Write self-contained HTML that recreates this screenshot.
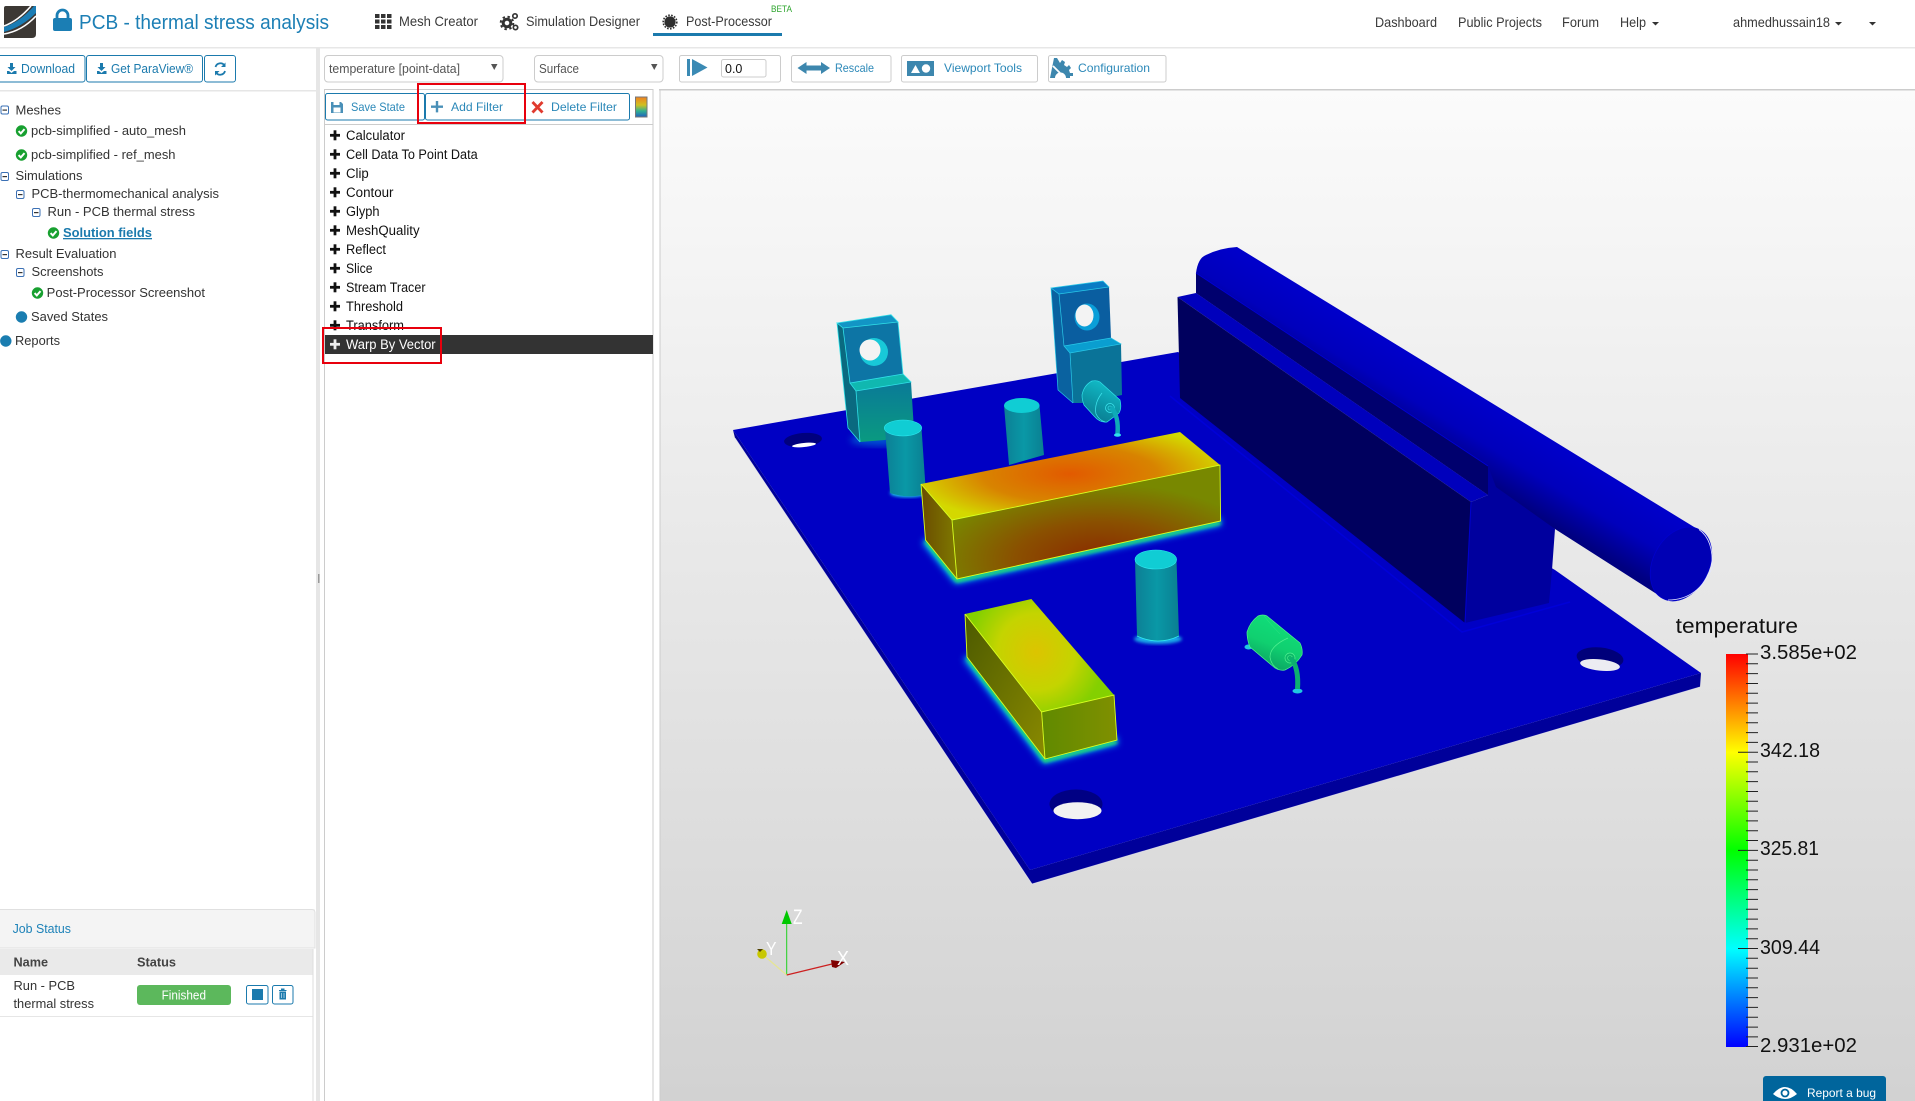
<!DOCTYPE html>
<html lang="en"><head><meta charset="utf-8"><title>PCB - thermal stress analysis</title>
<style>
html,body{margin:0;padding:0;background:#fff;width:1915px;height:1101px;overflow:hidden}
svg{display:block}
text{font-family:"Liberation Sans",sans-serif;white-space:pre}
.n{font-size:14px;fill:#3a3a3a}
.t{font-size:13px;fill:#333}
.l{font-size:13.5px;fill:#111}
.b{font-size:12px;fill:#2b88b8}
.v{font-size:20px;fill:#111}
</style></head><body>
<svg width="1915" height="1101" viewBox="0 0 1915 1101" xmlns="http://www.w3.org/2000/svg">
<defs>
<linearGradient id="bg" x1="0" y1="0" x2="0" y2="1"><stop offset="0" stop-color="#fbfbfb"/><stop offset="1" stop-color="#d2d2d2"/></linearGradient>
<linearGradient id="cb" x1="0" y1="0" x2="0" y2="1"><stop offset="0" stop-color="#ff0000"/><stop offset=".25" stop-color="#ffff00"/><stop offset=".5" stop-color="#00ff00"/><stop offset=".75" stop-color="#00ffff"/><stop offset="1" stop-color="#0000ff"/></linearGradient>
<linearGradient id="cyl" gradientUnits="userSpaceOnUse" x1="1520" y1="417" x2="1481" y2="481"><stop offset="0" stop-color="#0000cc"/><stop offset=".55" stop-color="#0000bc"/><stop offset="1" stop-color="#000080"/></linearGradient>
<linearGradient id="teal" x1="0" y1="0" x2="1" y2="0"><stop offset="0" stop-color="#0c7f95"/><stop offset=".5" stop-color="#0a98a6"/><stop offset="1" stop-color="#0a7f92"/></linearGradient>
<linearGradient id="tl" x1="0" y1="0" x2="0" y2="1"><stop offset="0" stop-color="#0a7a98"/><stop offset="1" stop-color="#0a9a80"/></linearGradient>
<linearGradient id="gc" x1="0.7" y1="0" x2="0.3" y2="1"><stop offset="0" stop-color="#10e07c"/><stop offset=".55" stop-color="#10d070"/><stop offset="1" stop-color="#0a9c60"/></linearGradient>
<linearGradient id="tc" x1="0.7" y1="0" x2="0.3" y2="1"><stop offset="0" stop-color="#12c0cc"/><stop offset=".55" stop-color="#0c98a8"/><stop offset="1" stop-color="#0a7a90"/></linearGradient>
<radialGradient id="boxtop" gradientUnits="userSpaceOnUse" cx="1070" cy="474" r="160" gradientTransform="translate(1070 474) scale(1 .32) translate(-1070 -474)"><stop offset="0" stop-color="#e25a00"/><stop offset=".55" stop-color="#d88400"/><stop offset="1" stop-color="#d4d800"/></radialGradient>
<radialGradient id="boxfront" gradientUnits="userSpaceOnUse" cx="1100" cy="560" r="170" gradientTransform="translate(1100 560) scale(1 .45) translate(-1100 -560)"><stop offset="0" stop-color="#8a2800"/><stop offset=".5" stop-color="#8a5000"/><stop offset="1" stop-color="#788800"/></radialGradient>
<linearGradient id="boxleft" x1="0" y1="0" x2="1" y2="0"><stop offset="0" stop-color="#6a4c00"/><stop offset="1" stop-color="#7f7a00"/></linearGradient>
<radialGradient id="sbtop" gradientUnits="userSpaceOnUse" cx="1036" cy="652" r="70"><stop offset="0" stop-color="#dcc400"/><stop offset=".55" stop-color="#c4d400"/><stop offset="1" stop-color="#84d000"/></radialGradient>
<linearGradient id="sbleft" x1="0" y1="0" x2="1" y2="1"><stop offset="0" stop-color="#4c5a00"/><stop offset="1" stop-color="#8a8a00"/></linearGradient>
<linearGradient id="sbfront" x1="0" y1="0" x2="1" y2="0"><stop offset="0" stop-color="#608a00"/><stop offset="1" stop-color="#809000"/></linearGradient>
<linearGradient id="icn" x1="0" y1="0" x2="0" y2="1"><stop offset="0" stop-color="#f08020"/><stop offset=".4" stop-color="#d0c020"/><stop offset=".7" stop-color="#30b090"/><stop offset="1" stop-color="#2060c0"/></linearGradient>
<filter id="bl" x="-20%" y="-20%" width="140%" height="140%"><feGaussianBlur stdDeviation="3.5"/></filter>
<filter id="bs" x="-20%" y="-20%" width="140%" height="140%"><feGaussianBlur stdDeviation="1.6"/></filter>
<g id="ck"><circle cx="5.5" cy="5.5" r="5.7" fill="#18a030"/><path d="M2.6 5.6 4.8 7.9 8.5 3.6" fill="none" stroke="#fff" stroke-width="2"/></g>
<g id="mb"><rect x=".5" y=".5" width="7.5" height="8" rx="1.5" fill="#fff" stroke="#3b70b4"/><rect x="2" y="4" width="4.5" height="1.2" fill="#333"/></g>
<g id="pl"><rect x="0" y="3.6" width="10" height="2.8"/><rect x="3.6" y="0" width="2.8" height="10"/></g>
</defs>

<rect width="1915" height="1101" fill="#fff"/>
<!-- top bar -->
<rect x="0" y="47" width="1915" height="1.5" fill="#e7e7e7"/>
<!-- logo -->
<path d="M6 6H36V34Q36 38 32 38H4V8Q4 6 6 6Z" fill="#3c3834"/>
<path d="M4 27Q20 22 34 6H36V13Q22 27 4 32Z" fill="#1a7cb4"/>
<path d="M4 34Q22 31 36 16" fill="none" stroke="#fff" stroke-width="1.6"/>
<path d="M4 26Q18 21 31 6" fill="none" stroke="#fff" stroke-width="1.6"/>
<!-- lock -->
<path d="M57 19V15.5a5.5 5.5 0 0 1 11 0V19" fill="none" stroke="#1b7eb4" stroke-width="2.8"/>
<rect x="53" y="18" width="19" height="13" rx="2" fill="#1b7eb4"/>
<text x="79" y="29" font-size="20.5" fill="#1c7fb5" textLength="250" lengthAdjust="spacingAndGlyphs">PCB - thermal stress analysis</text>
<!-- nav -->
<g fill="#333"><rect x="375" y="14" width="4.5" height="4"/><rect x="381" y="14" width="4.5" height="4"/><rect x="387" y="14" width="4.5" height="4"/><rect x="375" y="19.5" width="4.5" height="4"/><rect x="381" y="19.5" width="4.5" height="4"/><rect x="387" y="19.5" width="4.5" height="4"/><rect x="375" y="25" width="4.5" height="4"/><rect x="381" y="25" width="4.5" height="4"/><rect x="387" y="25" width="4.5" height="4"/></g>
<text class="n" x="399" y="26" textLength="79" lengthAdjust="spacingAndGlyphs">Mesh Creator</text>
<circle cx="507" cy="23" r="3.8" fill="none" stroke="#333" stroke-width="3"/><circle cx="507" cy="23" r="6.3" fill="none" stroke="#333" stroke-width="2" stroke-dasharray="2.4 2.6"/>
<circle cx="515" cy="16" r="2.2" fill="none" stroke="#333" stroke-width="1.7"/><circle cx="515.5" cy="27.5" r="2.2" fill="none" stroke="#333" stroke-width="1.7"/>
<text class="n" x="526" y="26" textLength="114" lengthAdjust="spacingAndGlyphs">Simulation Designer</text>
<circle cx="670" cy="22" r="5.6" fill="#2e2e2e"/><circle cx="670" cy="22" r="6.8" fill="none" stroke="#2e2e2e" stroke-width="1.6" stroke-dasharray="1.6 1.4"/>
<text class="n" x="686" y="26" textLength="86" lengthAdjust="spacingAndGlyphs">Post-Processor</text>
<text x="771" y="12" font-size="9" fill="#2ea52e" textLength="21" lengthAdjust="spacingAndGlyphs">BETA</text>
<rect x="653" y="33" width="129" height="3" fill="#1b7aad"/>
<text class="n" x="1375" y="27" textLength="62" lengthAdjust="spacingAndGlyphs">Dashboard</text>
<text class="n" x="1458" y="27" textLength="84" lengthAdjust="spacingAndGlyphs">Public Projects</text>
<text class="n" x="1562" y="27" textLength="37" lengthAdjust="spacingAndGlyphs">Forum</text>
<text class="n" x="1620" y="27" textLength="26" lengthAdjust="spacingAndGlyphs">Help</text>
<path d="M1652 22h7l-3.5 3.5z" fill="#333"/>
<text class="n" x="1733" y="27" textLength="97" lengthAdjust="spacingAndGlyphs">ahmedhussain18</text>
<path d="M1835 22h7l-3.5 3.5z" fill="#333"/><path d="M1869 22h7l-3.5 3.5z" fill="#333"/>

<!-- sidebar buttons -->
<g fill="#fff" stroke="#1b7aad"><rect x="-3" y="55.5" width="88" height="26.5" rx="2.5"/><rect x="86.5" y="55.500" width="116" height="26.500" rx="2.500"/><rect x="204.500" y="55.500" width="31" height="26.500" rx="2.500"/></g>
<g fill="#1b7aad"><path d="M10 63h3v4h2.500l-4 4-4-4H10zM7 71h2l2.500 2 2.500-2h2.500v3H7z"/><path d="M100 63h3v4h2.500l-4 4-4-4h2.500zM97 71h2l2.500 2 2.500-2h2.500v3H97z"/></g>
<text x="21" y="73" font-size="12.500" fill="#1b7aad" textLength="54" lengthAdjust="spacingAndGlyphs">Download</text>
<text x="111" y="73" font-size="12.500" fill="#1b7aad" textLength="82" lengthAdjust="spacingAndGlyphs">Get ParaView®</text>
<path d="M215.500 67a5 5 0 0 1 9-1.500M225 71a5 5 0 0 1-9 1.500" fill="none" stroke="#1b7aad" stroke-width="1.800"/><path d="M225.500 62.500v4.500h-4.500zM215 75.500V71h4.500z" fill="#1b7aad"/>
<rect x="0" y="90" width="316" height="1.500" fill="#e6e6e6"/>

<!-- sidebar dividers -->
<rect x="316" y="48" width="4" height="1053" fill="#e6e6e6"/>
<rect x="318" y="574" width="1.500" height="9" fill="#999"/>

<!-- tree -->
<use href="#mb" x="0.500" y="105.500"/><text class="t" x="15.500" y="114.500" textLength="45.500" lengthAdjust="spacingAndGlyphs">Meshes</text>
<use href="#ck" x="16" y="125.500"/><text class="t" x="31" y="135" textLength="155" lengthAdjust="spacingAndGlyphs">pcb-simplified - auto_mesh</text>
<use href="#ck" x="16" y="149.500"/><text class="t" x="31" y="159" textLength="144.500" lengthAdjust="spacingAndGlyphs">pcb-simplified - ref_mesh</text>
<use href="#mb" x="0.500" y="172"/><text class="t" x="15.500" y="180" textLength="67" lengthAdjust="spacingAndGlyphs">Simulations</text>
<use href="#mb" x="16" y="190"/><text class="t" x="31.500" y="198" textLength="187.500" lengthAdjust="spacingAndGlyphs">PCB-thermomechanical analysis</text>
<use href="#mb" x="32" y="208"/><text class="t" x="47.500" y="216" textLength="147.500" lengthAdjust="spacingAndGlyphs">Run - PCB thermal stress</text>
<use href="#ck" x="48" y="227.500"/><text x="63" y="237" font-size="13" font-weight="700" fill="#1b7aad" text-decoration="underline" textLength="89" lengthAdjust="spacingAndGlyphs">Solution fields</text>
<use href="#mb" x="0.500" y="250"/><text class="t" x="15.500" y="258" textLength="101" lengthAdjust="spacingAndGlyphs">Result Evaluation</text>
<use href="#mb" x="16" y="268"/><text class="t" x="31.500" y="276" textLength="72" lengthAdjust="spacingAndGlyphs">Screenshots</text>
<use href="#ck" x="32" y="287.500"/><text class="t" x="46.700" y="297" textLength="158.300" lengthAdjust="spacingAndGlyphs">Post-Processor Screenshot</text>
<circle cx="21.500" cy="317" r="5.700" fill="#1a7db0"/><text class="t" x="31" y="321" textLength="77" lengthAdjust="spacingAndGlyphs">Saved States</text>
<circle cx="5.800" cy="341" r="5.700" fill="#1a7db0"/><text class="t" x="15" y="345" textLength="45" lengthAdjust="spacingAndGlyphs">Reports</text>

<!-- job status -->
<rect x="0" y="909" width="315" height="39" fill="#f4f4f4"/>
<path d="M0 909.500H312a3 3 0 0 1 3 3V948H0" fill="none" stroke="#e0e0e0"/>
<text x="12.600" y="933" font-size="13" fill="#1d82b8" textLength="58.400" lengthAdjust="spacingAndGlyphs">Job Status</text>
<rect x="0" y="949" width="312.500" height="26" fill="#eaeaea"/>
<text x="13.500" y="966.500" font-size="12.500" font-weight="700" fill="#444" textLength="34.500" lengthAdjust="spacingAndGlyphs">Name</text>
<text x="137" y="966.500" font-size="12.500" font-weight="700" fill="#444" textLength="39" lengthAdjust="spacingAndGlyphs">Status</text>
<text class="t" x="13.500" y="990" textLength="61.500" lengthAdjust="spacingAndGlyphs">Run - PCB</text>
<text class="t" x="13.500" y="1008" textLength="80.500" lengthAdjust="spacingAndGlyphs">thermal stress</text>
<rect x="137" y="985" width="94" height="20" rx="3" fill="#5cb85c"/>
<text x="161.600" y="999.500" font-size="12.500" fill="#fff" textLength="44.400" lengthAdjust="spacingAndGlyphs">Finished</text>
<rect x="246.500" y="985.500" width="21.500" height="18.500" rx="2" fill="#fff" stroke="#1b7aad"/>
<rect x="252" y="989" width="11" height="11" fill="#1b7aad"/>
<rect x="272.500" y="985.500" width="20.500" height="18.500" rx="2" fill="#fff" stroke="#1b7aad"/>
<path d="M279 990h7.500v1H279zM281 988.500h3.500v1.500h-3.500zM279.500 991.500h6.500v8h-6.500z" fill="#1b7aad"/><path d="M281.500 993v5M284 993v5" stroke="#b8d8ea" stroke-width=".8"/>
<rect x="0" y="1016" width="312.500" height="1" fill="#e6e6e6"/>
<rect x="312.500" y="949" width="1" height="152" fill="#ddd"/>

<!-- selects and toolbar -->
<g fill="#fff" stroke="#ccc"><rect x="324.500" y="55.500" width="178.500" height="26.500" rx="3.500"/><rect x="534.500" y="55.500" width="128.500" height="26.500" rx="3.500"/><rect x="679.500" y="55.500" width="101" height="26.500" rx="2"/><rect x="791.500" y="55.500" width="99.500" height="26.500" rx="2"/><rect x="901.500" y="55.500" width="136" height="26.500" rx="2"/><rect x="1048.500" y="55.500" width="117.500" height="26.500" rx="2"/></g>
<text x="329" y="73" font-size="12.500" fill="#555" textLength="131" lengthAdjust="spacingAndGlyphs">temperature [point-data]</text>
<path d="M491 64h6.500l-3.250 6z" fill="#555"/>
<text x="539" y="73" font-size="12.500" fill="#555" textLength="40" lengthAdjust="spacingAndGlyphs">Surface</text>
<path d="M651 64h6.500l-3.250 6z" fill="#555"/>
<rect x="687" y="59" width="3" height="17" fill="#3b8ab4"/><path d="M692 59l15.500 8.500-15.500 8.500z" fill="#3b8ab4"/>
<rect x="721.500" y="59.500" width="44.500" height="17.500" rx="2" fill="#fff" stroke="#ccc"/>
<text x="725" y="73" font-size="12.500" fill="#111">0.0</text>
<path d="M797.500 68l9-6v3.500h14.500V62l9 6-9 6v-3.500h-14.500V74z" fill="#3d87ae"/>
<text class="b" x="835" y="72" textLength="39" lengthAdjust="spacingAndGlyphs">Rescale</text>
<rect x="907" y="61" width="27" height="15" fill="#3d87ae"/><path d="M911 73l4.500-8 4.500 8z" fill="#fff"/><circle cx="926" cy="68.500" r="4.200" fill="#fff"/>
<text class="b" x="944" y="72" textLength="78" lengthAdjust="spacingAndGlyphs">Viewport Tools</text>
<path d="M1054 58h3l3 5 2-3 3 2-1 3 3 2 2-2 2 3-2 2 1 3h3v3h-3v2h-4a5.500 5.500 0 0 0-11 0h-5Z" fill="#3d87ae"/>
<path d="M1053 66 1060 73" stroke="#fff" stroke-width="1.800" fill="none"/>
<text class="b" x="1078" y="72" textLength="72" lengthAdjust="spacingAndGlyphs">Configuration</text>

<!-- filter panel -->
<rect x="324.500" y="89.500" width="328.500" height="1012" fill="#fff" stroke="#ccc"/>
<rect x="325" y="124" width="328" height="1" fill="#ccc"/>
<rect x="325.500" y="93.500" width="99" height="26.500" rx="2" fill="#fff" stroke="#1b7aad"/>
<rect x="425.500" y="93.500" width="204" height="26.500" rx="2" fill="#fff" stroke="#1b7aad"/>
<path d="M331 102h10l2 2v9h-12z" fill="#4a90b8"/><rect x="333.500" y="102" width="6" height="3" fill="#fff"/><rect x="333.500" y="107.500" width="7" height="5" fill="#fff"/>
<text class="b" x="351" y="111" textLength="54" lengthAdjust="spacingAndGlyphs">Save State</text>
<path d="M431 105.500h4.800V101h2.400v4.500h4.800v2.400h-4.800v4.500h-2.400v-4.500H431z" fill="#4a90b8"/>
<text class="b" x="451" y="111" textLength="52" lengthAdjust="spacingAndGlyphs">Add Filter</text>
<path d="M532.500 102l10 10.500M542.500 102l-10 10.500" stroke="#e03a2e" stroke-width="2.800"/>
<text class="b" x="551" y="111" textLength="66" lengthAdjust="spacingAndGlyphs">Delete Filter</text>
<rect x="635.500" y="97" width="11.500" height="20" fill="url(#icn)" stroke="#777"/>

<g fill="#111">
<use href="#pl" x="330" y="130.300"/><use href="#pl" x="330" y="149.300"/><use href="#pl" x="330" y="168.300"/><use href="#pl" x="330" y="187.300"/><use href="#pl" x="330" y="206.300"/><use href="#pl" x="330" y="225.300"/><use href="#pl" x="330" y="244.300"/><use href="#pl" x="330" y="263.300"/><use href="#pl" x="330" y="282.300"/><use href="#pl" x="330" y="301.300"/><use href="#pl" x="330" y="320.300"/>
</g>
<text class="l" x="346" y="140" textLength="59" lengthAdjust="spacingAndGlyphs">Calculator</text>
<text class="l" x="346" y="159" textLength="131.700" lengthAdjust="spacingAndGlyphs">Cell Data To Point Data</text>
<text class="l" x="346" y="178" textLength="22.700" lengthAdjust="spacingAndGlyphs">Clip</text>
<text class="l" x="346" y="197" textLength="47.500" lengthAdjust="spacingAndGlyphs">Contour</text>
<text class="l" x="346" y="216" textLength="33.600" lengthAdjust="spacingAndGlyphs">Glyph</text>
<text class="l" x="346" y="235" textLength="73.600" lengthAdjust="spacingAndGlyphs">MeshQuality</text>
<text class="l" x="346" y="254" textLength="40" lengthAdjust="spacingAndGlyphs">Reflect</text>
<text class="l" x="346" y="273" textLength="26.500" lengthAdjust="spacingAndGlyphs">Slice</text>
<text class="l" x="346" y="292" textLength="79.500" lengthAdjust="spacingAndGlyphs">Stream Tracer</text>
<text class="l" x="346" y="311" textLength="57" lengthAdjust="spacingAndGlyphs">Threshold</text>
<text class="l" x="346" y="330" textLength="58" lengthAdjust="spacingAndGlyphs">Transform</text>
<rect x="325" y="335" width="328" height="19" fill="#333"/>
<use href="#pl" x="330" y="339.300" fill="#eee"/>
<text class="l" x="346" y="349" style="fill:#fff" textLength="89.600" lengthAdjust="spacingAndGlyphs">Warp By Vector</text>
<rect x="418" y="84" width="107" height="39" fill="none" stroke="#e8000d" stroke-width="2"/>
<rect x="323" y="328" width="118" height="35" fill="none" stroke="#e8000d" stroke-width="2"/>

<!-- viewport -->
<rect x="660" y="90" width="1255" height="1011" fill="url(#bg)"/>
<rect x="659" y="89" width="1256" height="1.500" fill="#ccc"/>
<rect x="659.500" y="89" width="1" height="1012" fill="#ccc"/>

<!-- plate -->
<polygon points="733,430 735,438 1032,884 1700,687 1701,673 1030,870" fill="#00009a"/>
<polygon points="733,430 1178,352 1555,570 1701,673 1030,870" fill="#0000c4"/>
<polyline points="735,438 1032,884 1700,687" fill="none" stroke="#e8e8f0" stroke-width=".8" opacity=".8"/>
<!-- holes -->
<ellipse cx="803" cy="440" rx="19" ry="7" fill="#00007e" transform="rotate(-5 803 440)"/><ellipse cx="804" cy="445" rx="12" ry="2" fill="#fff" transform="rotate(-6 804 445)"/>
<ellipse cx="1076" cy="804" rx="26.500" ry="14.500" fill="#000084"/><ellipse cx="1077.500" cy="810.700" rx="24" ry="8.500" fill="#f2f2f2"/>
<ellipse cx="1600" cy="658" rx="23.500" ry="10.500" fill="#00007a" transform="rotate(6 1600 658)"/><ellipse cx="1600" cy="665" rx="20" ry="5.700" fill="#ececf2" transform="rotate(6 1600 665)"/>

<!-- heat sink -->
<polyline points="1170,396 1462,632 1570,602" fill="none" stroke="#0000d8" stroke-width="1.500"/>
<path d="M1196 273Q1198 258 1206 255Q1220 248 1237 247L1699 530L1663 598L1555 529L1488 495L1196 293Z" fill="url(#cyl)"/>
<ellipse cx="1681" cy="564" rx="28" ry="39" transform="rotate(28 1681 564)" fill="#0000b4" stroke="#0000d0" stroke-width=".7"/>
<path d="M1699 529.500Q1714 540 1712 568Q1698 600 1668 600" fill="none" stroke="#e4e6ff" stroke-width=".8"/>
<polygon points="1196,273 1488,466 1488,495 1196,293" fill="#00006e"/>
<line x1="1196" y1="273" x2="1488" y2="466" stroke="#0000d8" stroke-width=".8"/>
<polygon points="1177.500,297 1196,293 1488,495 1471,502" fill="#0000bc"/>
<polygon points="1177.500,297 1471,502 1465,623 1180,398" fill="#00005e"/>
<polygon points="1471,502 1488,495 1488,466 1496,487 1555,529 1552,570 1549,603 1465,623" fill="#00009e"/>
<line x1="1471" y1="502" x2="1465" y2="623" stroke="#0000d0"/>

<!-- left terminal -->
<ellipse cx="880" cy="440" rx="30" ry="6" fill="#00b0e0" opacity=".45" filter="url(#bl)"/>
<polygon points="837,323 891,314.700 898,322 843,328" fill="#1295c5"/>
<polygon points="843,328 898,322 903,374 850,383" fill="#0d75a5"/>
<polygon points="837,323 843,328 850,383 856,391 860,442 848,428" fill="#0a6a80"/>
<polygon points="850,383 903,374 911,382 856,391" fill="#10b8b0"/>
<polygon points="856,391 911,382 914,430 885,440 860,442" fill="url(#tl)"/>
<g fill="none" stroke="#30e0e8" stroke-width=".8"><polyline points="837,323 891,314.700 898,322 843,328 837,323 848,428 860,442"/><polyline points="843,328 850,383 903,374 898,322"/><polyline points="850,383 856,391 911,382 903,374"/><line x1="856" y1="391" x2="860" y2="442"/></g>
<ellipse cx="874" cy="352" rx="14" ry="14" fill="#18c8d8"/><ellipse cx="870" cy="350" rx="10.500" ry="10.500" fill="#f3f3f3"/>

<!-- right terminal -->
<polygon points="1051,288 1103,281 1109,287 1059,294" fill="#0a7cc4"/>
<polygon points="1059,294 1109,287 1111,338 1064,346" fill="#0a5ea0"/>
<polygon points="1051,288 1059,294 1064,346 1070,353 1073,403 1058,390" fill="#0a62a0"/>
<polygon points="1064,346 1111,338 1121,344 1070,353" fill="#0a9ed0"/>
<polygon points="1070,353 1121,344 1122,395 1083,403 1073,403" fill="#0a7398"/>
<g fill="none" stroke="#28c8e8" stroke-width=".7"><polyline points="1051,288 1103,281 1109,287 1059,294 1051,288 1058,390 1073,403"/><polyline points="1059,294 1064,346 1070,353 1121,344 1111,338 1064,346"/><line x1="1070" y1="353" x2="1073" y2="403"/></g>
<ellipse cx="1087" cy="317" rx="12.500" ry="13.500" fill="#0a9ed8"/><ellipse cx="1084.500" cy="315.500" rx="9" ry="11" fill="#f3f3f3"/>

<!-- small cap near right terminal -->
<path d="M1082 395Q1084 385 1092 381Q1097 380 1100 382L1120 400Q1122 408 1119 413L1107 422Q1100 423 1094 416L1084 405Q1082 400 1082 395Z" fill="url(#tc)" stroke="#30e0e8" stroke-width=".7"/>
<path d="M1102 393Q1094 403 1096 414Q1099 420 1105 422" fill="none" stroke="#40e8f0" stroke-width=".7"/>
<circle cx="1110" cy="408" r="4.500" fill="#0c98a8" stroke="#40e8f0" stroke-width=".7"/><circle cx="1110" cy="408" r="2" fill="none" stroke="#40e8f0" stroke-width=".6"/>
<path d="M1111 407Q1119 416 1117.500 434" fill="none" stroke="#0faab8" stroke-width="4.500"/>
<ellipse cx="1117.500" cy="435" rx="3.500" ry="1.800" fill="#30e0f0"/>

<!-- cylinders -->
<g>
<ellipse cx="908" cy="493" rx="18" ry="4" fill="#20e0f0" filter="url(#bs)"/>
<path d="M885 428H921.500L926 494Q908 499 890 493Z" fill="url(#teal)"/>
<ellipse cx="903" cy="428" rx="18.700" ry="8" fill="#10cdd4" stroke="#30e8f0" stroke-width=".6"/>
<path d="M1004 405.500H1039.500L1044 455L1009 465Z" fill="url(#teal)"/>
<ellipse cx="1021.800" cy="405.500" rx="17.800" ry="7.500" fill="#10cdd4"/>
<ellipse cx="1158" cy="639" rx="24" ry="5" fill="#20d8f0" opacity=".8" filter="url(#bs)"/>
<path d="M1135 559.500H1176.500L1179 636Q1158 646 1137 636Z" fill="url(#teal)"/>
<path d="M1137 636Q1158 646 1179 636" fill="none" stroke="#30e8f0" stroke-width=".8"/>
<ellipse cx="1155.800" cy="559.500" rx="20.800" ry="9.500" fill="#10cdd4" stroke="#30e8f0" stroke-width=".6"/>
</g>

<!-- big box -->
<polyline points="925.500,540 957,579 1220.600,521" fill="none" stroke="#00d0ff" stroke-width="8" filter="url(#bl)"/>
<polyline points="925.500,541 957,581 1220.600,523" fill="none" stroke="#20e060" stroke-width="3" filter="url(#bs)"/>
<polygon points="921,484 1180,432 1220,465 952,520" fill="url(#boxtop)"/>
<polygon points="952,520 1220,465 1220.600,521 957,579" fill="url(#boxfront)"/>
<polygon points="921,484 952,520 957,579 925.500,540" fill="url(#boxleft)"/>
<g fill="none" stroke="#d8ff20" stroke-width=".9"><polyline points="921,484 952,520 1220,465 1220.600,521 957,579 925.500,540 921,484"/><line x1="952" y1="520" x2="957" y2="579"/></g>

<!-- small box -->
<polyline points="967,657 1045,759 1117,740" fill="none" stroke="#00d0ff" stroke-width="8" filter="url(#bl)"/>
<polyline points="967,658 1045,761 1117,742" fill="none" stroke="#20e060" stroke-width="3" filter="url(#bs)"/>
<polygon points="965,614 1031.400,599 1114,695 1041.600,712" fill="url(#sbtop)"/>
<polygon points="965,614 1041.600,712 1045,759 967,657" fill="url(#sbleft)"/>
<polygon points="1041.600,712 1114,695 1117,740 1045,759" fill="url(#sbfront)"/>
<g fill="none" stroke="#d8ff20" stroke-width=".9"><polyline points="965,614 1041.600,712 1114,695 1117,740 1045,759 967,657 965,614"/><line x1="1041.600" y1="712" x2="1045" y2="759"/></g>

<!-- green cap -->
<ellipse cx="1248.500" cy="647" rx="4" ry="2.500" fill="#20c8e0"/>
<ellipse cx="1297.500" cy="691" rx="5" ry="2.500" fill="#20c8e0"/>
<path d="M1247 632Q1250 622 1258 616Q1263 614 1267 616L1300 643Q1303 649 1302 655Q1296 665 1285 670Q1280 671 1275 668L1250 647Q1247 640 1247 632Z" fill="url(#gc)" stroke="#50f090" stroke-width=".7"/>
<path d="M1288 638Q1270 646 1270 657Q1271 665 1278 669" fill="none" stroke="#50f090" stroke-width=".7"/>
<path d="M1264 616Q1272 626 1280 634" fill="none" stroke="#50f090" stroke-width=".4" opacity=".6"/>
<circle cx="1290" cy="658" r="5" fill="#0cb868" stroke="#50f090" stroke-width=".7"/><circle cx="1290" cy="658" r="2.500" fill="none" stroke="#50f090" stroke-width=".6"/>
<path d="M1291 658Q1299 668 1297.500 689" fill="none" stroke="#0cb070" stroke-width="5"/>

<!-- axes -->
<line x1="786.700" y1="975" x2="786.700" y2="920" stroke="#20d020" stroke-width="1"/>
<path d="M786.700 910l5 14h-10z" fill="#00c800"/>
<line x1="786.700" y1="975" x2="762" y2="954" stroke="#e6e690" stroke-width="1.200"/>
<circle cx="762" cy="954" r="4.800" fill="#c8c800"/><path d="M757 949h6l-3 3z" fill="#504000"/>
<line x1="786.700" y1="975" x2="832" y2="964" stroke="#cc2020" stroke-width="1.200"/>
<path d="M831 960l14 2-9 6-4-1z" fill="#800000"/>
<text x="793" y="924" font-size="21" fill="#fff" textLength="9.500" lengthAdjust="spacingAndGlyphs">Z</text>
<text x="766" y="955" font-size="18" fill="#fff" textLength="10.500" lengthAdjust="spacingAndGlyphs">Y</text>
<text x="837" y="965" font-size="20" fill="#fff" textLength="12" lengthAdjust="spacingAndGlyphs">X</text>

<!-- colour bar -->
<rect x="1726" y="654" width="22" height="393" fill="url(#cb)"/>
<g stroke="#222" stroke-width="1">
<path d="M1746 654h12M1746 663.800h12M1746 673.600h12M1746 683.500h12M1746 693.300h12M1746 703.100h12M1746 712.900h12M1746 722.700h12M1746 732.600h12M1746 742.400h12M1738 752.200h20M1746 762h12M1746 771.800h12M1746 781.600h12M1746 791.500h12M1746 801.300h12M1746 811.100h12M1746 820.900h12M1746 830.700h12M1746 840.500h12M1738 850.400h20M1746 860.200h12M1746 870h12M1746 879.800h12M1746 889.600h12M1746 899.400h12M1746 909.300h12M1746 919.100h12M1746 928.900h12M1746 938.700h12M1738 948.500h20M1746 958.300h12M1746 968.200h12M1746 978h12M1746 987.800h12M1746 997.600h12M1746 1007.400h12M1746 1017.200h12M1746 1027.100h12M1746 1036.900h12M1746 1046.500h12"/>
</g>
<text class="v" x="1675.700" y="633" style="font-size:21px" textLength="122.300" lengthAdjust="spacingAndGlyphs">temperature</text>
<text class="v" x="1760" y="659" textLength="97" lengthAdjust="spacingAndGlyphs">3.585e+02</text>
<text class="v" x="1760" y="757" textLength="60" lengthAdjust="spacingAndGlyphs">342.18</text>
<text class="v" x="1760" y="855" textLength="59" lengthAdjust="spacingAndGlyphs">325.81</text>
<text class="v" x="1760" y="954" textLength="60" lengthAdjust="spacingAndGlyphs">309.44</text>
<text class="v" x="1760" y="1052" textLength="97" lengthAdjust="spacingAndGlyphs">2.931e+02</text>

<!-- report a bug -->
<path d="M1763 1101V1079a3 3 0 0 1 3-3h117a3 3 0 0 1 3 3v22z" fill="#00659c"/>
<path d="M1773 1094q12-14 24 0q-12 10-24 0z" fill="#fff"/><circle cx="1785" cy="1093" r="3.500" fill="none" stroke="#00659c" stroke-width="1.800"/>
<text x="1807" y="1097" font-size="12" fill="#fff" textLength="69" lengthAdjust="spacingAndGlyphs">Report a bug</text>
</svg>
</body></html>
